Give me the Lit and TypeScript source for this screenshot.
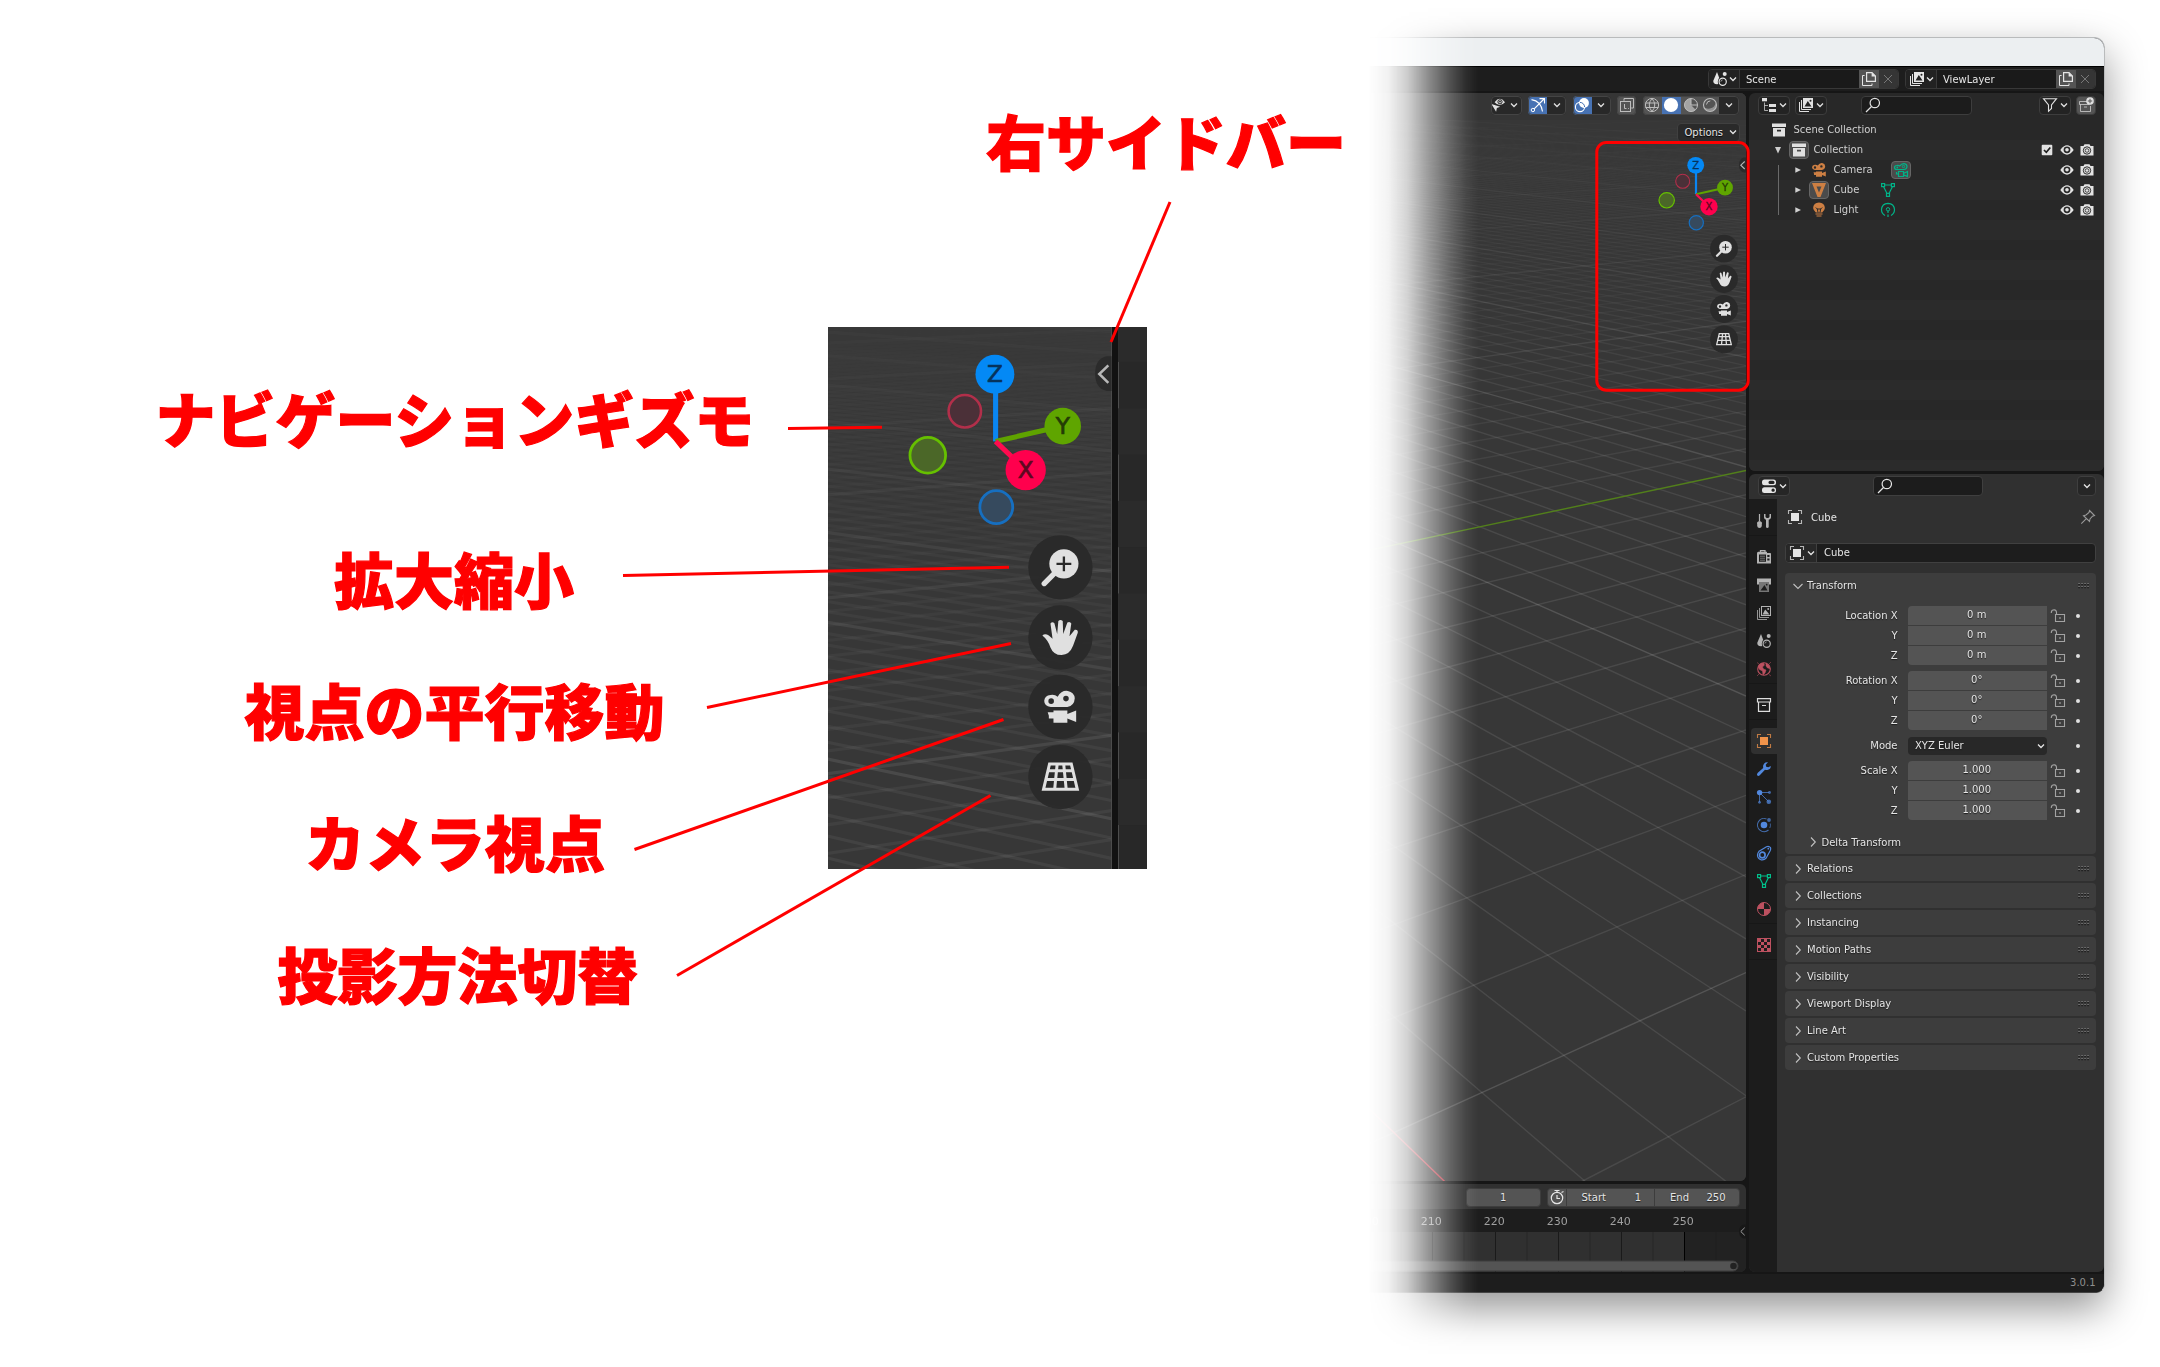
import { LitElement, html, svg, css, nothing } from "lit";
import { customElement, property } from "lit/decorators.js";

type Frag = ReturnType<typeof svg>;

/* Icons are drawn on a 16 unit grid. */
const ICONS: Record<string, Frag> = {
  chev: svg`<path d="M5 6.500 8 9.500 11 6.500" fill="none" stroke="currentColor" stroke-width="1.300"/>`,
  chevRight: svg`<path d="M6 3.500 10.300 8 6 12.500" fill="none" stroke="currentColor" stroke-width="1.100"/>`,
  chevDown: svg`<path d="M3.500 6 8 10.400 12.500 6" fill="none" stroke="currentColor" stroke-width="1.100"/>`,
  eyeCursor: svg`<path d="M3.600 5.200Q8.800-1.600 14 5.200 8.800 11 3.600 5.200Z" fill="currentColor"/><circle cx="9" cy="4.800" r="2.100" fill="none" stroke="#232323" stroke-width="1"/><circle cx="9" cy="4.600" r=".9" fill="#232323"/><path d="M.4 7 9.200 9.800 5.900 11 5.100 14.800Z" fill="currentColor"/>`,
  gizmo: svg`<path d="M2.700 13.300 14 2M9.500 1.600h5v5M1.500 2.600Q11 4 12.500 14.500" fill="none" stroke="currentColor" stroke-width="1.100"/><circle cx="2.900" cy="13" r="1.700" fill="#4772b3" stroke="currentColor"/>`,
  overlay: svg`<circle cx="10" cy="6" r="4.900" fill="currentColor"/><circle cx="6" cy="10" r="4.600" fill="none" stroke="currentColor" stroke-width="1.100"/><path d="M6 5.400A4.600 4.600 0 0 1 10.600 10" fill="none" stroke="#4772b3" stroke-width="1"/>`,
  xray: svg`<rect x="1.500" y="4.500" width="10" height="10" fill="none" stroke="currentColor"/><path d="M5 3.800V1.500h9.500V11h-2.300M5.500 7v4.500h2M9 11.500h.8" fill="none" stroke="currentColor"/>`,
  wire: svg`<g fill="none" stroke="currentColor"><circle cx="8" cy="8" r="6.600"/><path d="M1.500 6h13M1.500 10.500h13M8 1.500Q2.500 8 8 14.500M8 1.500Q13.500 8 8 14.500"/></g>`,
  solid: svg`<circle cx="8" cy="8" r="7.100" fill="currentColor"/>`,
  material: svg`<circle cx="8" cy="8" r="6.500" fill="none" stroke="currentColor"/><path d="M8 1.500V8H14.500A6.500 6.500 0 0 1 8 14.500V8H1.500A6.500 6.500 0 0 1 8 1.500Z" fill="currentColor"/>`,
  shadeMat: svg`<circle cx="8" cy="8" r="6.500" fill="none" stroke="currentColor"/><path d="M8 1.500V8L12.700 12.700A6.500 6.500 0 0 1 1.500 8 6.500 6.500 0 0 1 8 1.500Z" fill="currentColor" opacity=".75"/><path d="M8 1.500V8h6.500" fill="none" stroke="currentColor"/>`,
  rendered: svg`<circle cx="8" cy="8" r="6.500" fill="none" stroke="currentColor" stroke-width="1.100"/><path d="M2.200 10.500A6.500 6.500 0 0 0 14.300 9.500L14 5Q13 10.500 8 11.500 4 12 2.200 10.500Z" fill="currentColor" opacity=".6"/><path d="M4.500 7.500Q4.800 4 8.300 3.900" fill="none" stroke="currentColor"/>`,
  scene: svg`<path d="M5 1 8.200 9.500Q8.400 13 5 13.300 1 13 1.300 9.700Z" fill="currentColor"/><circle cx="12.700" cy="3" r="2" fill="currentColor"/><circle cx="10.700" cy="10.700" r="4.900" fill="#1f1f1f"/><circle cx="10.700" cy="10.700" r="3.600" fill="none" stroke="currentColor" stroke-width="1.200"/><path d="M8.900 10.600Q9 9 10.600 8.900" fill="none" stroke="currentColor" stroke-width=".7"/>`,
  copy: svg`<path d="M5.600 1.600H11L14.400 5V10.400H5.600Z" fill="none" stroke="currentColor" stroke-width="1.200"/><path d="M10.600 1.200V5.400H14.800Z" fill="currentColor"/><path d="M3.600 4.500H1.500V14.500H11V12.500" fill="none" stroke="currentColor"/>`,
  close: svg`<path d="M4 4 12 12M12 4 4 12" stroke="currentColor" stroke-width="1"/>`,
  layers: svg`<path d="M5 1H15V11H5ZM6.500 9.500H13.500L9.800 4Z" fill="currentColor" fill-rule="evenodd"/><circle cx="12.500" cy="3.700" r="1" fill="#222"/><path d="M3.500 3V12.500H13M1.500 5V14.500H11" fill="none" stroke="currentColor"/>`,
  layersTab: svg`<rect x="5.500" y="1.500" width="9" height="9" fill="none" stroke="currentColor"/><path d="M6.500 9.500 9.200 4.500 13.500 9.500Z" fill="currentColor"/><circle cx="12.200" cy="4" r="1" fill="currentColor"/><path d="M3.500 3V12.500H13M1.500 5V14.500H11" fill="none" stroke="currentColor" opacity=".8"/>`,
  tree: svg`<rect x="1" y="1" width="5" height="3.300" fill="currentColor"/><path d="M3.500 5.500V13.500H7M3.500 8.500H7" fill="none" stroke="currentColor" opacity=".7"/><rect x="8" y="7" width="7" height="3" fill="currentColor"/><rect x="8" y="12" width="7" height="3" fill="currentColor"/>`,
  search: svg`<circle cx="9.800" cy="6" r="4.700" fill="none" stroke="currentColor" stroke-width="1.200"/><path d="M6.500 9.500 1 15" stroke="currentColor" stroke-width="1.300"/>`,
  filter: svg`<path d="M1.500 1.700H14.500L9.500 8V11.500L6.500 14.300V8Z" fill="none" stroke="currentColor" stroke-width="1.100"/>`,
  newColl: svg`<path d="M9 4.500H1.500V7.500H11.500M2.500 7.500V14.500H12.500V9M6 10H9" fill="none" stroke="currentColor" opacity=".7"/><circle cx="12" cy="4" r="3.800" fill="currentColor"/><path d="M12 1.800V6.200M9.800 4H14.200" stroke="#545454"/>`,
  coll: svg`<path d="M1 1.500H15V5H1ZM2 6H14V14.500H2ZM6 7.800V9.500H10V7.800Z" fill="currentColor" fill-rule="evenodd"/>`,
  collTab: svg`<path d="M1.500 1.700H14.500V5H1.500ZM2.500 5V14.300H13.500V5M6 8.500H10" fill="none" stroke="currentColor" stroke-width="1.200"/>`,
  camera: svg`<path d="M3.700 2.800Q5.500 2.400 6.800 3.600 8.500.7 11.200 1.100 14 1.600 14.200 4.300 14 7.600 11 8H3.800Q1 7.600 1 5.300 1.200 3.100 3.700 2.800ZM4 4.300A1.200 1.200 0 1 0 4 6.700 1.200 1.200 0 1 0 4 4.300ZM10.400 3.200A1.200 1.200 0 1 0 10.400 5.600 1.200 1.200 0 1 0 10.400 3.200Z" fill="currentColor" fill-rule="evenodd"/><path d="M5 9.500H11V11L14.800 9.500V14.500L11 13V14.800H5V13H3V11.800L2.500 10.300H5Z" fill="currentColor"/>`,
  cameraData: svg`<path d="M3.700 3.500Q5.500 3 6.800 4 8.500 1.400 11.200 1.600 13.800 2 14 4.500 13.800 7.300 11 7.500H3.800Q1.500 7.400 1.500 5.500 1.500 3.700 3.700 3.500Z" fill="none" stroke="currentColor" stroke-width="1.200"/><circle cx="4.300" cy="5.500" r=".9" fill="currentColor"/><circle cx="10.500" cy="4.500" r="1.200" fill="none" stroke="currentColor"/><path d="M5.500 9.500H10.500V14.500H5.500ZM10.500 11.500 14.500 9.500V14.500L10.500 12.800M5.500 12H3.500V10" fill="none" stroke="currentColor" stroke-width="1.200"/>`,
  meshObj: svg`<path d="M1 1H15L9.500 15H6.500ZM5.500 4.500 8 10.500 10.500 4.500Z" fill="currentColor" fill-rule="evenodd"/>`,
  mesh: svg`<g fill="none" stroke="currentColor" stroke-width="1.200"><rect x="1.600" y="1.600" width="3" height="3"/><rect x="11.400" y="1.600" width="3" height="3"/><rect x="6.500" y="11.400" width="3" height="3"/><path d="M4.600 3H11.400M3.500 4.600 7 11.400M12.500 4.600 9 11.400"/></g>`,
  light: svg`<path d="M8 .6Q13.600 1 13.900 6 13.600 8.400 11.200 10.500H4.800Q2.400 8.400 2.100 6 2.400 1 8 .6Z" fill="currentColor"/><path d="M4.800 5.500 6.300 7 7 10.500M11.200 5.500 9.700 7 9 10.500M6 7H10" fill="none" stroke="#2a2a2a" stroke-width="1"/><path d="M4.500 12H11.500M5.500 14H10.500" stroke="currentColor" stroke-width="1.200"/>`,
  lightData: svg`<path d="M5 13.500Q1.500 11.500 1.500 7.500 2 1.600 8 1.300 14 1.600 14.500 7.500 14.500 11.500 11 13.500" fill="none" stroke="currentColor" stroke-width="1.200"/><circle cx="8" cy="7.300" r="1.700" fill="none" stroke="currentColor"/><path d="M8 9V11M8 12.500V15" stroke="currentColor" stroke-width="1.200"/>`,
  check: svg`<rect x="2.700" y="2.700" width="10.600" height="10.600" rx="1" fill="currentColor"/><path d="M5 8 7.300 10.300 11.300 5.500" fill="none" stroke="#222" stroke-width="1.700"/>`,
  eye: svg`<path d="M1.300 8Q8-1.300 14.700 8 8 17.300 1.300 8Z" fill="currentColor"/><circle cx="8" cy="7.800" r="3.400" fill="#2a2a2a"/><circle cx="8" cy="7.800" r="1.800" fill="currentColor"/>`,
  photo: svg`<path d="M1.500 4H4.500L5.500 2.300H10.500L11.500 4H14.500V13.500H1.500Z" fill="currentColor"/><circle cx="8" cy="8.500" r="3.700" fill="none" stroke="#2a2a2a" stroke-width="1"/><circle cx="8" cy="8.500" r="1.800" fill="none" stroke="#2a2a2a" stroke-width=".8"/>`,
  tri: svg`<path d="M5.300 5.300 11 8 5.300 10.800Z" fill="currentColor"/>`,
  triDown: svg`<path d="M5 5H11L8 11.500Z" fill="currentColor"/>`,
  props: svg`<rect x="1" y="1.500" width="14" height="5.700" rx="2.500" fill="currentColor"/><rect x="7.500" y="2.700" width="6" height="3.300" rx="1.500" fill="#232323"/><rect x="1" y="9.200" width="14" height="5.700" rx="2.500" fill="currentColor"/><rect x="10.500" y="10.400" width="3.200" height="3.300" rx="1.500" fill="#232323"/>`,
  tools: svg`<path d="M3.500 1V8" stroke="currentColor" stroke-width="1.200"/><path d="M3.500 8Q6.800 9 5.800 11V13Q5.500 15 3.500 15T1.200 13V11Q.3 9 3.500 8Z" fill="currentColor"/><path d="M8 1V4.500Q8.200 6.300 10 6.800V14Q10.200 15 11.300 15T12.700 14V6.800Q14.700 6.300 15 4.500V1H13.500V4L12.300 5H10.700L9.500 4V1Z" fill="currentColor"/>`,
  render: svg`<path d="M4.500 3V1.700H9V3" fill="none" stroke="currentColor" stroke-width="1.300"/><path d="M2.300 2.800H11V4H14.300Q15 4 15 5V14.500H1V4.500Q1 2.800 2.300 2.800ZM3 5.500V12.800H10V5.500ZM11.300 6V8H13.500V6ZM11.300 9.500V11.500H13.500V9.500Z" fill="currentColor" fill-rule="evenodd"/><path d="M4 7.200H9M4 9.200H9M4 11.200H9" stroke="currentColor" opacity=".6"/>`,
  output: svg`<path d="M1 1.500H15V7.500H13V5H3V7.500H1Z" fill="currentColor"/><path d="M3 5H13V15H3ZM4.500 13.500H11.500L8.500 8Z" fill="currentColor" opacity=".6" fill-rule="evenodd"/><circle cx="10.700" cy="7.700" r=".9" fill="#1d1d1d"/>`,
  world: svg`<circle cx="8" cy="8" r="6.300" fill="none" stroke="currentColor" stroke-width="1.100"/><path d="M2 6Q3.500 2 7.500 2L8.500 4 6.500 6 7.500 8 10 9 9 12 7 14 6.500 10 3.500 8.500ZM10 2.300Q13.500 4 14 7.500L11.500 7 10 5ZM1 1.500 3 3M13 13.500 15 15M15 1 13 3M1 15 3 13" fill="currentColor" stroke="currentColor" stroke-width=".5"/>`,
  object: svg`<rect x="4" y="4" width="8" height="8" fill="currentColor"/><path d="M1.500 5V1.500H5M11 1.500H14.500V5M14.500 11V14.500H11M5 14.500H1.500V11" fill="none" stroke="currentColor" stroke-width="1.100" opacity=".75"/>`,
  wrench: svg`<path d="M14.800 5Q14.900 8 12 8.800 10.500 9.200 9 8.700L4 14Q2.500 15.500 1.300 14.500.3 13.200 1.800 11.800L7.200 7Q6.500 4.500 8 2.700 9.500 1 12 1.300L9.700 3.700 10.200 5.800 12.300 6.300Z" fill="currentColor"/>`,
  particles: svg`<circle cx="3.600" cy="3.600" r="2.700" fill="currentColor"/><path d="M4 3.500H13M3.500 4V13M4 4 12.500 12.500" stroke="currentColor" opacity=".7"/><circle cx="13.500" cy="3.500" r="1.400" fill="currentColor" opacity=".7"/><circle cx="3.500" cy="13.300" r="1.400" fill="currentColor" opacity=".7"/><circle cx="12.800" cy="12.800" r="2.300" fill="currentColor" opacity=".75"/>`,
  physics: svg`<circle cx="8" cy="8" r="3.300" fill="currentColor"/><path d="M10.500 1.900A6.600 6.600 0 1 0 12.500 13" fill="none" stroke="currentColor" stroke-width="1.100" opacity=".75"/><path d="M14.300 6.500A6.600 6.600 0 0 1 13.800 11" fill="none" stroke="currentColor" opacity=".6"/><circle cx="13" cy="3" r="1.900" fill="currentColor" opacity=".7"/>`,
  constraint: svg`<path d="M3 6.300 10.500 1.700Q13 .8 14.500 2.700 15 4 14 6L10.200 13Q8 15.500 5 14.800 1.500 13.500 1.500 10 1.600 8 3 6.300Z" fill="none" stroke="currentColor" stroke-width="1.200"/><circle cx="6.300" cy="10" r="2.800" fill="none" stroke="currentColor" stroke-width="1.700"/><circle cx="12.300" cy="3.700" r=".9" fill="currentColor"/>`,
  texture: svg`<rect x="1.500" y="1.500" width="13" height="13" fill="none" stroke="currentColor"/><path d="M2 2h3v3H2zM8 2h3v3H8zM5 5h3v3H5zM11 5h3v3h-3zM2 8h3v3H2zM8 8h3v3H8zM5 11h3v3H5zM11 11h3v3h-3z" fill="currentColor"/>`,
  pin: svg`<path d="M9.500 1.500 14.500 6.500 12.500 7.200 10 10 9.500 12.500 3.500 6.700 6 6 9 3.500ZM6.300 9.700 1.300 14.700" fill="none" stroke="currentColor" stroke-width="1.100"/>`,
  lock: svg`<path d="M1.300 5V4.500Q1.500 1.700 4.200 1.700 6.500 2 6.500 4.500V6.500M5.500 6.500H14.500V13.500H5.500ZM10 9V11" fill="none" stroke="currentColor" stroke-width="1.100"/>`,
  grip: svg`<path d="M2.500 5.500H13M2.500 8.500H13" stroke="currentColor" stroke-width="1.100" stroke-dasharray="1.100 1.900"/><path d="M2.500 6.600H13M2.500 9.600H13" stroke="#111" stroke-width="1.100" stroke-dasharray="1.100 1.900"/>`,
  clock: svg`<circle cx="8" cy="9" r="5.700" fill="none" stroke="currentColor" stroke-width="1.200"/><path d="M5.500 1.500H10.500M8 1.500V3.500M12.500 3.500 14.500 2.500M8 6V9.500H11" fill="none" stroke="currentColor" stroke-width="1.200"/>`,
};

const icon = (name: string, cls = "") =>
  html`<svg class="ic ${cls}" viewBox="0 0 16 16">${ICONS[name]}</svg>`;

/* Perspective floor grid: each family of lines runs to its own vanishing point on the horizon. */
const HORIZON = 46;
const EDGE = 1746;
const LEFT = 1340;
const clamp = (v: number, lo: number, hi: number) => Math.max(lo, Math.min(hi, v));

function gridLines() {
  const out: Frag[] = [];
  const add = (yEdge: number, slope: number, major: boolean, color?: string) => {
    const fade = major ? clamp((yEdge - 90) / 420, 0, 1) : clamp((yEdge - 120) / 430, 0, 1);
    const alpha = color ? 1 : (major ? 0.15 : 0.095) * fade;
    if (alpha <= 0.004) return;
    out.push(svg`<line x1=${LEFT} y1=${(yEdge - slope * (EDGE - LEFT)).toFixed(1)} x2=${EDGE} y2=${yEdge.toFixed(1)}
      stroke=${color ?? "#fff"} stroke-opacity=${alpha.toFixed(3)} stroke-width="1.400"/>`);
  };
  for (let i = -90; i <= 11; i++) {
    if (i === 0) continue;
    const y = HORIZON + 7834 / (18.455 - i);
    add(y, -(y - HORIZON) / 2040, i % 10 === 0);
  }
  for (let j = 1; j <= 120; j++) {
    const y = HORIZON + 11947 / (8.38 + j);
    add(y, (y - HORIZON) / 1481, j % 10 === 0);
  }
  add(470.5, -0.2115, true, "#527f1b");
  add(1471.7, 0.963, true, "#c03a48");
  return out;
}

const navButton = (y: number, glyph: Frag) => svg`
  <circle cx="1724" cy=${y} r="13.900" fill="#292929" fill-opacity=".93"/>
  <g transform="translate(1716 ${y - 8})" color="#e0e0e0">${glyph}</g>`;

const HAND = svg`<path d="M.2 7.200Q1.300 6 3 7.200L4.600 8.600 3.700 2Q4.500.9 5.400 1.900L6.600 6.500 7.100.9Q8 -.1 9 .9L9.200 6.500 11 1.500Q12.200.9 12.700 2L11.900 7.500 14.200 4.700Q15.700 4.500 15.500 6L13.500 11.500Q12 15.500 8.500 15.600 5 15.600 3.700 12.300 2.500 9 .2 7.200Z" fill="currentColor"/>`;
const ZOOM = svg`<circle cx="9.500" cy="6.500" r="6.300" fill="currentColor"/><path d="M5.500 10.500 1 15" stroke="currentColor" stroke-width="2.300" stroke-linecap="round"/><path d="M9.500 3.300V9.700M6.300 6.500H12.700" stroke="#292929" stroke-width="1"/>`;
const PERSP = svg`<path d="M3.300 2.300H12.700L15.300 13.300H.7ZM2.500 5.300H13.500M1.500 9H14.500M6.600 2.300 5.500 13.300M9.400 2.300 10.500 13.300" fill="none" stroke="currentColor" stroke-width="1.300"/>`;

function sceneArt() {
  return svg`
    <rect x="1340" y="93" width="406" height="1088" fill="#373737"/>
    ${gridLines()}
    <path d="M1746 157.500h-2q-5 1-5 7.500t5 7.500h2z" fill="#2b2b2b"/>
    <path d="M1744.700 161.500 1740.800 165.200 1744.700 169" fill="none" stroke="#b8b8b8" stroke-width="1.100"/>
    <circle cx="1682.700" cy="181.300" r="7" fill="#4b3038" stroke="#b22f4a" stroke-width="1.100"/>
    <path d="M1696 194.300V166" stroke="#0a86f2" stroke-width="2.200"/>
    <path d="M1696 194.300 1725 187.700" stroke="#5fa300" stroke-width="2.200"/>
    <path d="M1696 194.300 1709 206.700" stroke="#ff0b4f" stroke-width="2.200"/>
    <circle cx="1666.700" cy="200.300" r="7.700" fill="#4b6728" stroke="#66c000" stroke-width="1.200"/>
    <circle cx="1696.300" cy="222.700" r="7.100" fill="#364a5e" stroke="#166fc0" stroke-width="1.200"/>
    <circle cx="1695.700" cy="165.300" r="8.400" fill="#0489f5"/>
    <circle cx="1725" cy="187.700" r="7.900" fill="#5fa500"/>
    <circle cx="1709" cy="206.700" r="8.700" fill="#ff004d"/>
    <g class="axis" text-anchor="middle">
      <text x="1695.700" y="168.800" fill="#06335c" stroke="#06335c">Z</text>
      <text x="1725" y="191.200" fill="#243c05" stroke="#243c05">Y</text>
      <text x="1709" y="210.200" fill="#5c0820" stroke="#5c0820">X</text>
    </g>
    ${navButton(248.7, ZOOM)}${navButton(279, HAND)}${navButton(309, ICONS.camera)}${navButton(339.3, PERSP)}`;
}

const artStyles = css`
  .axis { font: 10px "DejaVu Sans", sans-serif; stroke-width: .3px; }
`;

@customElement("zoom-inset")
export class ZoomInset extends LitElement {
  static styles = [artStyles, css`
    :host { display: block; }
    svg { display: block; width: 100%; height: 100%; }
  `];
  render() {
    return html`<svg viewBox="1623.600 144.900 137.800 234.100" preserveAspectRatio="none">
      ${sceneArt()}
      <rect x="1749" y="93" width="20" height="300" fill="#282828"/>
      ${[140, 180, 220, 260, 300, 340].map((y) => svg`<rect x="1749" y=${y} width="20" height="20" fill="#2b2b2b"/>`)}
      <rect x="1746" y="93" width="3" height="300" fill="#121212"/>
    </svg>`;
  }
}

@customElement("viewport-3d")
export class Viewport3d extends LitElement {
  static styles = [artStyles, css`
    :host { display: block; position: relative; overflow: hidden; border-radius: 0 6px 6px 0; background: #373737; }
    .art { position: absolute; inset: 0; width: 406px; height: 1088px; }
    .head { position: relative; display: flex; justify-content: flex-end; gap: 6.200px; padding: 2.500px 7.500px 0 0; height: 27px; box-sizing: border-box; background: #353535; }
    .grp { display: flex; height: 19.500px; border-radius: 4px; outline: 1px solid #444; outline-offset: -1px; background: #282828; box-sizing: border-box; overflow: hidden; color: #e0e0e0; }
    .cell { display: flex; align-items: center; justify-content: center; width: 19.200px; }
    .cell.on { background: #4772b3; color: #fff; }
    .cell.mid { background: #545454; color: #bdbdbd; }
    .wide { width: 31px; }
    .wide .ic + .ic { margin-left: -1px; }
    .ic { width: 16px; height: 16px; flex: none; display: block; }
    .opts { position: relative; display: flex; justify-content: flex-end; padding: 2.500px 6.500px 0 0; }
    .btn { display: flex; align-items: center; height: 19px; box-sizing: border-box; border: 1px solid #404040; border-radius: 4px; background: #2a2a2a; color: #e5e5e5; font: 10px "DejaVu Sans", sans-serif; padding-left: 7px; width: 63px; justify-content: space-between; text-shadow: 0 1px 1px #000; }
    .btn .ic { margin-right: -2px; }
  `];
  render() {
    return html`
      <svg class="art" viewBox="1340 93 406 1088">${sceneArt()}</svg>
      <div class="head">
        <div class="grp"><div class="cell wide">${icon("eyeCursor")}${icon("chev")}</div></div>
        <div class="grp"><div class="cell on">${icon("gizmo")}</div><div class="cell">${icon("chev")}</div></div>
        <div class="grp"><div class="cell on">${icon("overlay")}</div><div class="cell">${icon("chev")}</div></div>
        <div class="grp"><div class="cell mid">${icon("xray")}</div></div>
        <div class="grp">
          <div class="cell mid">${icon("wire")}</div><div class="cell on">${icon("solid")}</div>
          <div class="cell mid">${icon("shadeMat")}</div><div class="cell mid">${icon("rendered")}</div>
          <div class="cell">${icon("chev")}</div>
        </div>
      </div>
      <div class="opts"><div class="btn">Options${icon("chev")}</div></div>`;
  }
}

@customElement("time-line")
export class TimeLine extends LitElement {
  static styles = css`
    :host { display: block; position: relative; background: #303030; border-radius: 0 6px 6px 0; overflow: hidden; font: 10px "DejaVu Sans", sans-serif; color: #e5e5e5; }
    .head { height: 25px; display: flex; justify-content: flex-end; gap: 6px; padding: 3.500px 6.500px 0 0; box-sizing: border-box; }
    .box { display: flex; height: 19px; box-sizing: border-box; border: 1px solid #3d3d3d; border-radius: 4px; background: #545454; text-shadow: 0 1px 1px #222; overflow: hidden; }
    .box > div { display: flex; align-items: center; justify-content: space-between; box-sizing: border-box; border-right: 1px solid #3d3d3d; }
    .box > div:last-child { border-right: 0; }
    .frame { width: 72.500px; justify-content: center !important; }
    .clock { width: 19px; justify-content: center !important; }
    .start { width: 88.500px; padding: 0 13px 0 15px; }
    .end { width: 83.500px; padding: 0 13px 0 15px; }
    .ic { width: 16px; height: 16px; display: block; }
    .body { display: block; width: 406px; height: 63px; }
    .num { font: 11px "DejaVu Sans", sans-serif; }
  `;
  render() {
    const ticks = [200, 210, 220, 230, 240, 250];
    const x = (f: number) => 344.5 - (250 - f) * 6.3;
    return html`
      <div class="head">
        <div class="box"><div class="frame">1</div></div>
        <div class="box">
          <div class="clock"><svg class="ic" viewBox="0 0 16 16">${ICONS.clock}</svg></div>
          <div class="start"><span>Start</span><span>1</span></div>
          <div class="end"><span>End</span><span>250</span></div>
        </div>
      </div>
      <svg class="body" viewBox="0 0 406 63">
        <rect width="406" height="23" fill="#1d1d1d"/>
        <rect y="23" width="344" height="40" fill="#303030"/>
        <rect x="344" y="23" width="62" height="40" fill="#222"/>
        ${ticks.map((f) => svg`
          <text class="num" x=${x(f) - 1.3} y="16" text-anchor="middle" fill="#a0a0a0">${f}</text>
          <rect x=${x(f) - 0.5} y="23" width="1" height="40" fill=${f === 250 ? "#000" : "#1a1a1a"}/>
          <rect x=${x(f + 5) - 0.5} y="23" width="1" height="40" fill=${f === 250 ? "#1e1e1e" : "#262626"}/>`)}
        <rect x="-10" y="52" width="408" height="10" rx="5" fill="#545454" stroke="#3c3c3c" stroke-width="1"/>
        <circle cx="393.500" cy="57" r="3.300" fill="#222"/>
        <path d="M406 15.500h-2q-5 1-5 7t5 7h2z" fill="#181818"/>
        <path d="M404.700 18.700 400.800 22.500 404.700 26.300" fill="none" stroke="#a0a0a0"/>
      </svg>`;
  }
}

interface Row { label: string; depth: number; ico: string; tone: string; boxed?: boolean; data?: string; dataBoxed?: boolean; open?: boolean; check?: boolean; }

const ROWS: Row[] = [
  { label: "Scene Collection", depth: 0, ico: "coll", tone: "white" },
  { label: "Collection", depth: 1, ico: "coll", tone: "white", boxed: true, open: true, check: true },
  { label: "Camera", depth: 2, ico: "camera", tone: "orange", data: "cameraData", dataBoxed: true },
  { label: "Cube", depth: 2, ico: "meshObj", tone: "orange", boxed: true, data: "mesh" },
  { label: "Light", depth: 2, ico: "light", tone: "orange", data: "lightData" },
];

@customElement("out-liner")
export class OutLiner extends LitElement {
  static styles = css`
    :host { display: flex; flex-direction: column; background: #282828; border-radius: 6px; overflow: hidden; font: 10px "DejaVu Sans", sans-serif; color: #cfcfcf; }
    .ic { width: 16px; height: 16px; display: block; flex: none; }
    .head { height: 26.500px; display: flex; align-items: center; padding: 0 8px 2px 8.500px; color: #e0e0e0; flex: none; box-sizing: border-box; }
    .dd, .field, .add { display: flex; align-items: center; height: 19.500px; box-sizing: border-box; border: 1px solid #3d3d3d; border-radius: 4px; }
    .dd { width: 32px; padding-left: 2px; margin-right: 5px; background: #232323; }
    .dd .ic + .ic { margin-left: -2px; }
    .field { width: 111px; background: #1c1c1c; margin-left: 29px; padding-left: 3px; }
    .space { flex: 1; }
    .add { width: 20px; background: #545454; justify-content: center; }
    .tree { flex: 1; position: relative; background: repeating-linear-gradient(#282828 0 20px, #2b2b2b 20px 40px); }
    .row { display: flex; align-items: center; height: 20px; padding-right: 9.500px; }
    .d0 { padding-left: 20px; }
    .d1 { padding-left: 20px; }
    .d2 { padding-left: 40px; }
    .tw { width: 20px; display: flex; align-items: center; }
    .tw .ic { margin-left: 1px; }
    .box { width: 20px; height: 18px; display: flex; align-items: center; justify-content: center; border-radius: 4px; margin-right: 4.500px; box-sizing: border-box; flex: none; }
    .boxed { background: #4b4b4b; border: 1px solid #666; }
    .white { color: #e0e0e0; }
    .orange { color: #cd7f43; }
    .name { width: 44px; white-space: nowrap; }
    .green { color: #00b388; margin-left: 0; }
    .far { margin-left: 13.500px; }
    .end { margin-left: auto; display: flex; gap: 4px; color: #e3e3e3; }
    .guide { position: absolute; left: 29px; top: 45px; width: 1px; height: 50px; background: #6a6a6a; }
  `;
  render() {
    return html`
      <div class="head">
        <div class="dd">${icon("tree")}${icon("chev")}</div>
        <div class="dd">${icon("layers")}${icon("chev")}</div>
        <div class="field">${icon("search")}</div>
        <div class="space"></div>
        <div class="dd">${icon("filter")}${icon("chev")}</div>
        <div class="add">${icon("newColl")}</div>
      </div>
      <div class="tree">
        <div class="guide"></div>
        ${ROWS.map((r) => html`
          <div class="row d${r.depth}">
            ${r.depth ? html`<div class="tw">${icon(r.open ? "triDown" : "tri")}</div>` : nothing}
            <div class="box ${r.tone} ${r.boxed ? "boxed" : ""}">${icon(r.ico)}</div>
            <div class="name">${r.label}</div>
            ${r.data ? html`<div class="box green ${r.dataBoxed ? "boxed far" : ""}">${icon(r.data)}</div>` : nothing}
            ${r.depth ? html`<div class="end">${r.check ? icon("check") : nothing}${icon("eye")}${icon("photo")}</div>` : nothing}
          </div>`)}
      </div>`;
  }
}

const TABS: { ico: string; tone: string; on?: boolean }[][] = [
  [{ ico: "tools", tone: "gray" }],
  [{ ico: "render", tone: "gray" }, { ico: "output", tone: "gray" }, { ico: "layersTab", tone: "gray" }, { ico: "scene", tone: "gray" }, { ico: "world", tone: "red" }],
  [{ ico: "collTab", tone: "light" }],
  [{ ico: "object", tone: "orange", on: true }, { ico: "wrench", tone: "blue" }, { ico: "particles", tone: "blue" }, { ico: "physics", tone: "blue" }, { ico: "constraint", tone: "blue" }, { ico: "mesh", tone: "green" }, { ico: "material", tone: "red" }],
  [{ ico: "texture", tone: "red" }],
];

const VALUES: { label: string; value: string }[][] = [
  [{ label: "Location X", value: "0 m" }, { label: "Y", value: "0 m" }, { label: "Z", value: "0 m" }],
  [{ label: "Rotation X", value: "0°" }, { label: "Y", value: "0°" }, { label: "Z", value: "0°" }],
  [{ label: "Scale X", value: "1.000" }, { label: "Y", value: "1.000" }, { label: "Z", value: "1.000" }],
];

const PANELS = ["Relations", "Collections", "Instancing", "Motion Paths", "Visibility", "Viewport Display", "Line Art", "Custom Properties"];

@customElement("properties-editor")
export class PropertiesEditor extends LitElement {
  static styles = css`
    :host { display: flex; flex-direction: column; background: #303030; border-radius: 6px; overflow: hidden; font: 10px "DejaVu Sans", sans-serif; color: #e5e5e5; }
    .ic { width: 16px; height: 16px; display: block; flex: none; }
    .head { height: 25px; flex: none; display: flex; align-items: center; padding: 0 8px 1px 8.500px; box-sizing: border-box; }
    .dd, .field { display: flex; align-items: center; height: 19.500px; box-sizing: border-box; border: 1px solid #3f3f3f; border-radius: 4px; background: #262626; }
    .dd { width: 32px; padding-left: 2px; }
    .dd .ic + .ic { margin-left: -2px; }
    .field { width: 110px; background: #1c1c1c; margin-left: 83.500px; padding-left: 3px; }
    .one { width: 19.500px; margin-left: auto; padding-left: 1px; }
    .cols { flex: 1; display: flex; min-height: 0; }
    .tabs { width: 28px; flex: none; background: #1c1c1c; display: flex; flex-direction: column; gap: 8px; padding-top: 7.500px; box-sizing: border-box; }
    .tab { height: 28px; display: flex; align-items: center; justify-content: center; padding-left: 2px; box-sizing: border-box; }
    .tab.on { background: #303030; border-radius: 4px 0 0 4px; margin-left: 2px; padding-left: 0; height: 26px; margin-top: 1px; margin-bottom: 1px; }
    .group { box-shadow: 0 1px 0 #171717; }
    .gray { color: #b3b3b3; } .light { color: #ddd; } .red { color: #bd5160; } .orange { color: #f0934a; } .blue { color: #5288dd; } .green { color: #00c08b; }
    .main { flex: 1; padding: 8px 8px 0 8px; display: flex; flex-direction: column; gap: 2px; }
    .crumb { height: 20px; display: flex; align-items: center; padding: 0 0 0 2px; }
    .crumb span { margin-left: 8px; flex: 1; }
    .crumb .pin { color: #999; }
    .name { display: flex; height: 19.500px; box-sizing: border-box; border: 1px solid #404040; border-radius: 4px; background: #1d1d1d; margin: 14px 0 8.500px; }
    .name .pick { width: 31px; display: flex; align-items: center; padding-left: 3px; box-sizing: border-box; background: #282828; border-right: 1px solid #404040; border-radius: 4px 0 0 4px; }
    .pick .ic + .ic { margin-left: -2.500px; }
    .name .txt { display: flex; align-items: center; padding-left: 7px; }
    .panel { background: #3d3d3d; border-radius: 4px; text-shadow: 0 1px 1px #1c1c1c; }
    .ph { height: 25px; display: flex; align-items: center; padding: 0 4px 0 5px; color: #e5e5e5; }
    .ph span { margin-left: 1px; flex: 1; }
    .ph .ic { color: #c0c0c0; }
    .ph .grip { color: #8a8a8a; }
    .vals { padding-top: 7.500px; display: flex; flex-direction: column; gap: 5px; }
    .vr { height: 20px; display: flex; align-items: center; }
    .vr label { width: 112.500px; text-align: right; margin-right: 10.500px; }
    .val { width: 139px; height: 19px; background: #545454; text-align: center; line-height: 18px; text-indent: -1.500px; }
    .vg .vr:first-child .val { border-radius: 4px 0 0 0; }
    .vg .vr:last-child .val { border-radius: 0 0 0 4px; }
    .mode { width: 139px; height: 18px; background: #282828; border-radius: 4px; display: flex; align-items: center; justify-content: space-between; padding: 0 0 0 7px; box-sizing: border-box; margin-right: 18px; }
    .mode .ic { margin-right: -2px; }
    .lk { margin-left: 3px; color: #a3a3a3; margin-right: -1px; }
    .dot { width: 4px; height: 4px; border-radius: 50%; background: #e0e0e0; margin-left: 11px; }
    .delta { height: 24px; margin-top: 4.500px; padding-left: 19.500px; }
  `;
  private group(rows: { label: string; value: string }[]) {
    return html`<div class="vg">${rows.map((r) => html`
      <div class="vr"><label>${r.label}</label><div class="val">${r.value}</div>${icon("lock", "lk")}<div class="dot"></div></div>`)}</div>`;
  }
  render() {
    return html`
      <div class="head">
        <div class="dd">${icon("props")}${icon("chev")}</div>
        <div class="field">${icon("search")}</div>
        <div class="dd one">${icon("chev")}</div>
      </div>
      <div class="cols">
        <div class="tabs">${TABS.map((g) => html`<div class="group">${g.map((t) => html`<div class="tab ${t.tone} ${t.on ? "on" : ""}">${icon(t.ico)}</div>`)}</div>`)}</div>
        <div class="main">
          <div class="crumb">${icon("object")}<span>Cube</span>${icon("pin", "pin")}</div>
          <div class="name"><div class="pick">${icon("object")}${icon("chev")}</div><div class="txt">Cube</div></div>
          <div class="panel">
            <div class="ph">${icon("chevDown")}<span>Transform</span>${icon("grip", "grip")}</div>
            <div class="vals">
              ${this.group(VALUES[0])}${this.group(VALUES[1])}
              <div class="vr"><label>Mode</label><div class="mode">XYZ Euler${icon("chev")}</div><div class="dot"></div></div>
              ${this.group(VALUES[2])}
              <div class="ph delta">${icon("chevRight")}<span>Delta Transform</span></div>
            </div>
          </div>
          ${PANELS.map((p) => html`<div class="panel"><div class="ph">${icon("chevRight")}<span>${p}</span>${icon("grip", "grip")}</div></div>`)}
        </div>
      </div>`;
  }
}

@customElement("id-selector")
export class IdSelector extends LitElement {
  @property() ico = "";
  @property() label = "";
  static styles = css`
    :host { display: flex; height: 19.500px; width: 191.500px; box-sizing: border-box; border: 1px solid #383838; border-radius: 4px; background: #1a1a1a; color: #e5e5e5; font: 10px "DejaVu Sans", sans-serif; overflow: hidden; }
    .ic { width: 16px; height: 16px; display: block; flex: none; }
    .pick { width: 31px; display: flex; align-items: center; padding-left: 3px; box-sizing: border-box; background: #222; border-right: 1px solid #383838; }
    .pick .ic + .ic { margin-left: -2.500px; }
    .txt { flex: 1; padding-left: 6.500px; display: flex; align-items: center; }
    .btn { width: 19.500px; display: flex; align-items: center; justify-content: center; background: #545454; }
    .off { background: #353535; color: #777; }
  `;
  render() {
    return html`<div class="pick">${icon(this.ico)}${icon("chev")}</div><div class="txt">${this.label}</div>
      <div class="btn">${icon("copy")}</div><div class="btn off">${icon("close")}</div>`;
  }
}

const LABELS = [
  { text: "右サイドバー", x: 986, y: 140 },
  { text: "ナビゲーションギズモ", x: 155.5, y: 417 },
  { text: "拡大縮小", x: 334, y: 577.5 },
  { text: "視点の平行移動", x: 244.5, y: 709 },
  { text: "カメラ視点", x: 305, y: 840.5 },
  { text: "投影方法切替", x: 277.5, y: 973 },
];

const LEADERS = [
  [1170, 202, 1111, 342], [788, 428.5, 882, 427.3], [623, 575.5, 1009, 567.3],
  [707, 707.5, 1011, 643.5], [634.5, 849.5, 1003.5, 719.5], [677, 975.5, 990.5, 795.5],
];

@customElement("app-root")
export class AppRoot extends LitElement {
  static styles = css`
    :host { display: block; width: 2160px; height: 1367px; background: #fff; }
    .page { position: relative; width: 2160px; height: 1367px; overflow: hidden; display: flex; justify-content: flex-end; }
    .fade { width: 820px; height: 1367px; box-sizing: border-box; padding: 37px 55px 74px 0; flex: none;
      -webkit-mask-image: linear-gradient(90deg, transparent 28px, rgba(0,0,0,.06) 48px, rgba(0,0,0,.22) 67px, rgba(0,0,0,.5) 88px, rgba(0,0,0,.77) 110px, rgba(0,0,0,.93) 126px, #000 138px);
      mask-image: linear-gradient(90deg, transparent 28px, rgba(0,0,0,.06) 48px, rgba(0,0,0,.22) 67px, rgba(0,0,0,.5) 88px, rgba(0,0,0,.77) 110px, rgba(0,0,0,.93) 126px, #000 138px); }
    .win { width: 765px; height: 1256px; box-sizing: border-box; border: 1px solid #b9bbbc; border-bottom-color: #444; border-left: 0; border-radius: 0 11px 9px 0; background: #161616; overflow: hidden; display: flex; flex-direction: column; box-shadow: 0 16px 40px rgba(0,0,0,.42); }
    .title { height: 28px; flex: none; background: #eceff1; border-bottom: 1px solid #000; }
    .top { height: 24px; flex: none; background: #1d1d1d; display: flex; justify-content: flex-end; align-items: center; gap: 5.500px; padding-right: 8px; margin-bottom: 2px; }
    .work { display: flex; gap: 3px; flex: 1; min-height: 0; }
    .left { width: 406px; display: flex; flex-direction: column; gap: 3px; }
    .right { flex: 1; display: flex; flex-direction: column; gap: 3px; }
    viewport-3d { height: 1088px; }
    time-line { height: 88px; }
    out-liner { height: 378px; }
    properties-editor { height: 798px; }
    .status { height: 18px; flex: none; margin-top: 2px; background: #1d1d1d; color: #8f8f8f; font: 10px/17px "DejaVu Sans", sans-serif; text-align: right; padding-right: 8.500px; }
    .inset { position: absolute; left: 828px; top: 327px; width: 319px; height: 542px; }
    .marks { position: absolute; inset: 0; width: 2160px; height: 1367px; }
    .label { position: absolute; transform: translateY(-50%); color: #f00; white-space: nowrap; font: 900 60px/1 "Noto Sans CJK JP", sans-serif; -webkit-text-stroke: 1.200px #f00; }
  `;
  render() {
    return html`<div class="page">
      <div class="fade">
        <div class="win">
          <div class="title"></div>
          <div class="top"><id-selector ico="scene" label="Scene"></id-selector><id-selector ico="layers" label="ViewLayer"></id-selector></div>
          <div class="work">
            <div class="left"><viewport-3d></viewport-3d><time-line></time-line></div>
            <div class="right"><out-liner></out-liner><properties-editor></properties-editor></div>
          </div>
          <div class="status">3.0.1</div>
        </div>
      </div>
      <zoom-inset class="inset"></zoom-inset>
      <svg class="marks" viewBox="0 0 2160 1367" fill="none" stroke="#f00" stroke-width="3">
        <rect x="1596.800" y="142.500" width="151.400" height="247.700" rx="9.500"/>
        ${LEADERS.map(([a, b, c, d]) => svg`<line x1=${a} y1=${b} x2=${c} y2=${d}/>`)}
      </svg>
      ${LABELS.map((l) => html`<div class="label" style="left:${l.x}px;top:${l.y}px">${l.text}</div>`)}
    </div>`;
  }
}
